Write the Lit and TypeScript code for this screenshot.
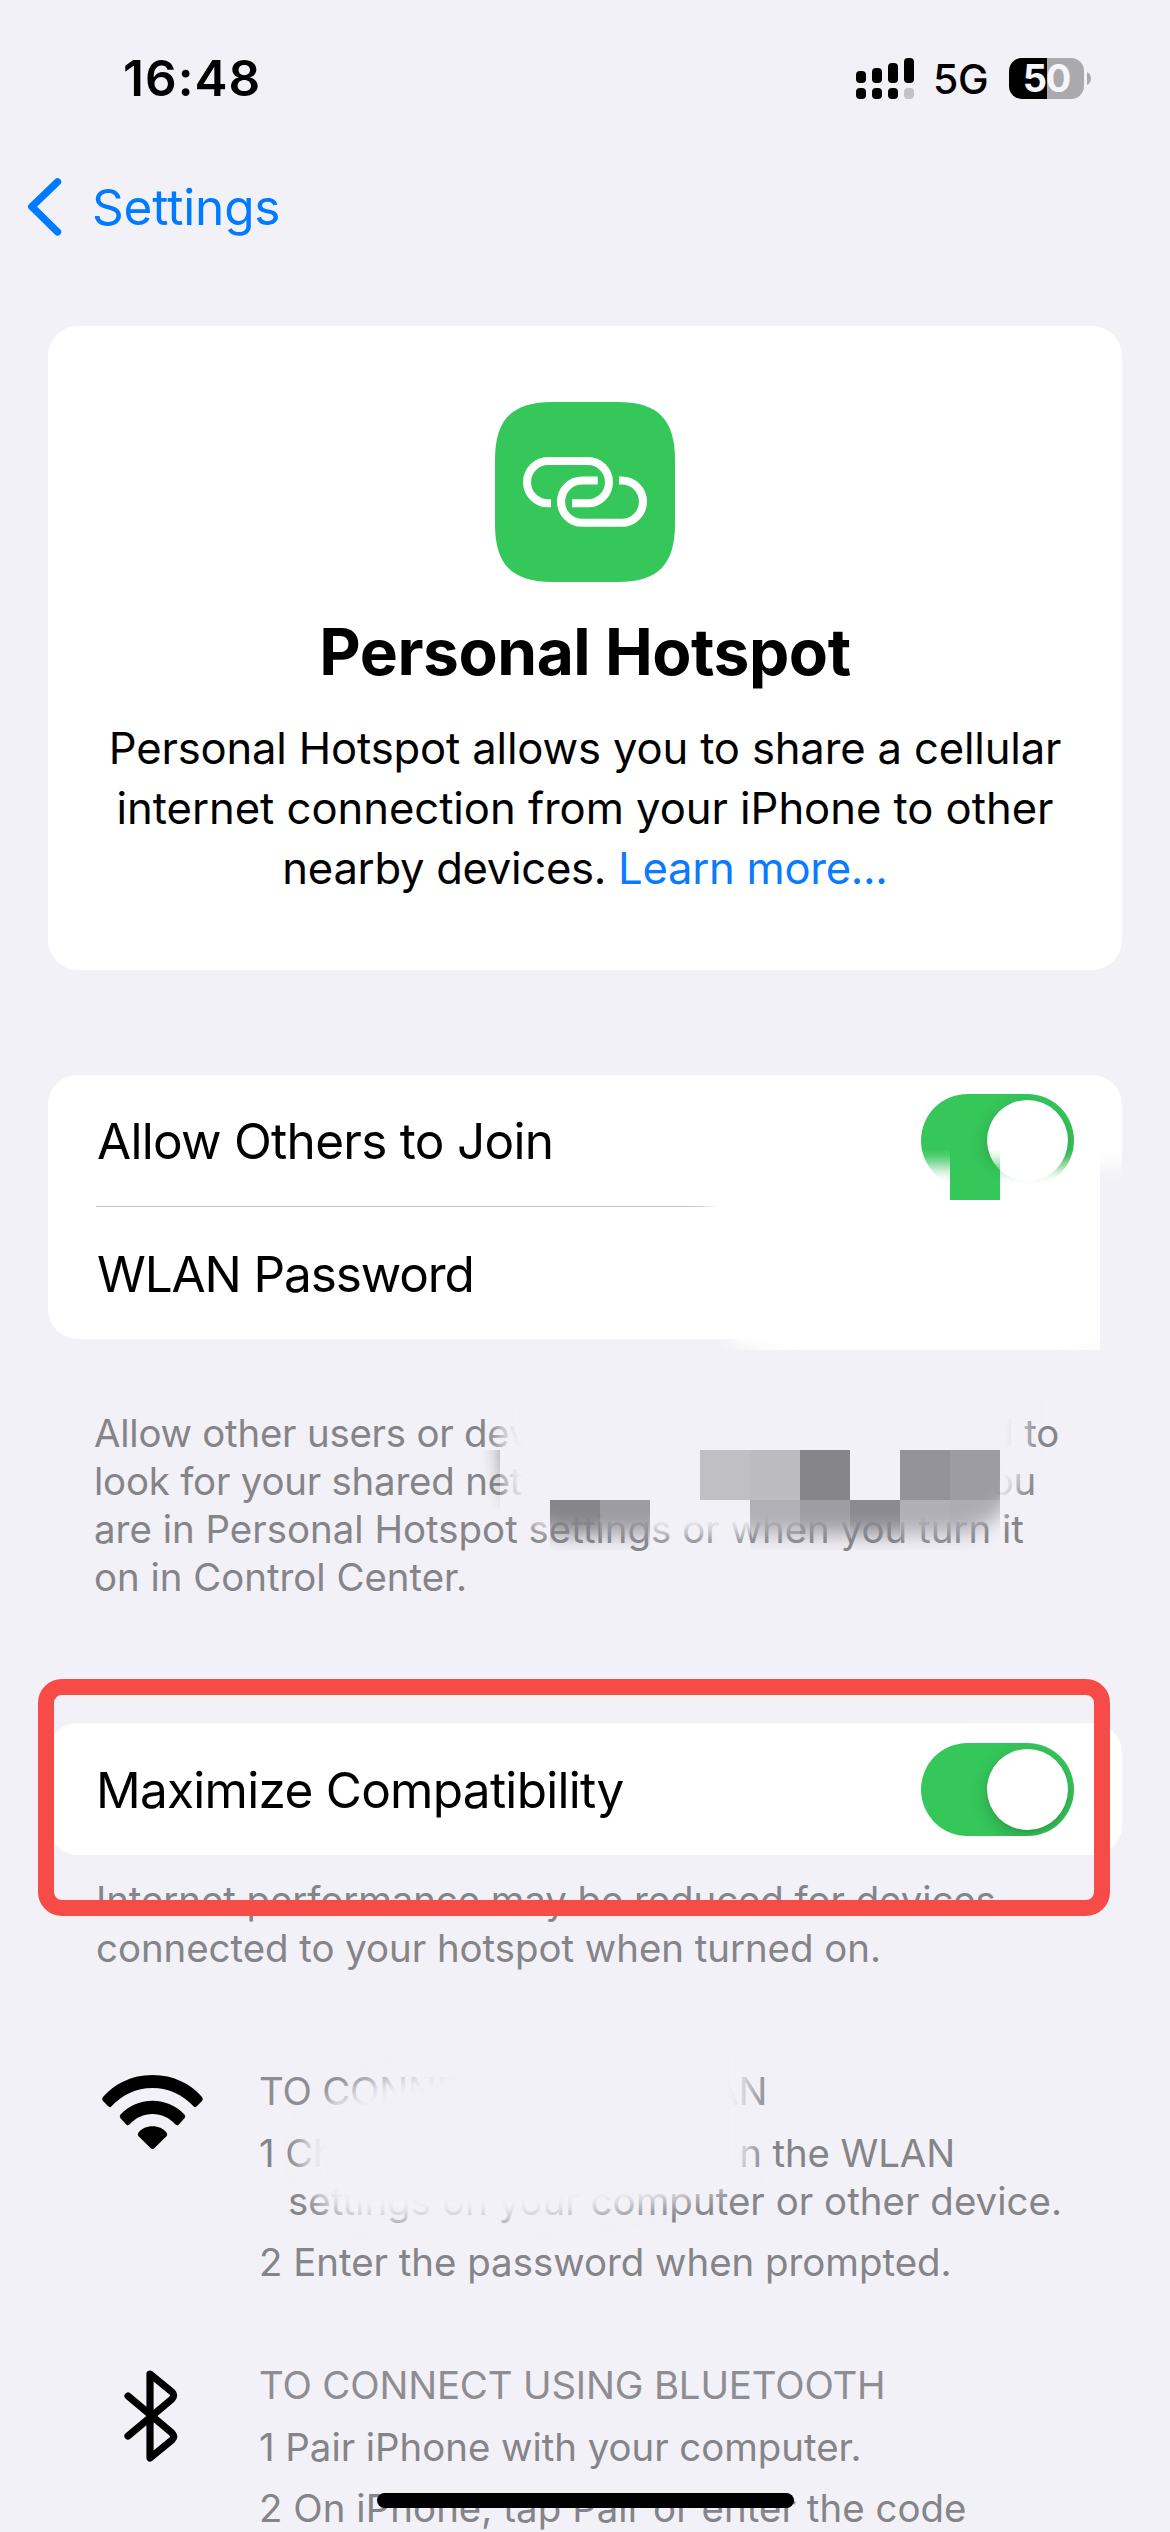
import { LitElement, html, svg, css, nothing } from "lit";
import { customElement, property } from "lit/decorators.js";

/** A line of copy and the tracking that it is set with. */
interface Line {
  text: string;
  tracking: number;
  tail?: string;
  width?: number;
  link?: string;
}

const INTRO: Line[] = [
  { text: "Personal Hotspot allows you to share a cellular", tracking: -0.165 },
  { text: "internet connection from your iPhone to other", tracking: -0.045 },
  { text: "nearby devices. ", link: "Learn more...", tracking: -0.281 },
];

const SHARING_NOTE: Line[] = [
  { text: "Allow other users or dev", tail: "d to", width: 965, tracking: -0.22 },
  { text: "look for your shared net", tail: "ou", width: 942, tracking: -0.2 },
  { text: "are in Personal Hotspot settings or when you turn it", tracking: 0.024 },
  { text: "on in Control Center.", tracking: -0.007 },
];

const COMPAT_NOTE: Line[] = [
  { text: "Internet performance may be reduced for devices", tracking: -0.063 },
  { text: "connected to your hotspot when turned on.", tracking: -0.02 },
];

const lineOf = (l: Line) => html`<div
  class="line"
  style="letter-spacing:${l.tracking}px;${l.width ? `width:${l.width}px` : ""}"
><span>${l.text}${l.link ? html`<a class="link">${l.link}</a>` : nothing}</span>${l.tail
    ? html`<span>${l.tail}</span>`
    : nothing}</div>`;

@customElement("toggle-switch")
export class ToggleSwitch extends LitElement {
  static styles = css`
    :host {
      display: block;
      flex: none;
    }
    .track {
      display: flex;
      justify-content: flex-end;
      align-items: center;
      box-sizing: border-box;
      width: 153px;
      height: 93px;
      padding-right: 6px;
      border-radius: 47px;
      background: #36c75b;
      overflow: hidden;
    }
    .knob {
      width: 81px;
      height: 81px;
      border-radius: 50%;
      background: #fff;
      box-shadow: 0 6px 18px rgba(0, 0, 0, 0.2), 0 2px 3px rgba(0, 0, 0, 0.06);
    }
  `;
  render() {
    return html`<div class="track"><div class="knob"></div></div>`;
  }
}

@customElement("status-bar")
export class StatusBar extends LitElement {
  static styles = css`
    :host {
      display: flex;
      align-items: center;
      justify-content: space-between;
      height: 60px;
      padding: 48px 79px 0 123px;
    }
    .time {
      font-weight: 600;
      font-size: 49.5px;
      line-height: 60px;
      letter-spacing: 1.06px;
    }
    .right {
      display: flex;
      align-items: center;
    }
    svg {
      display: block;
    }
    .net {
      margin: 2px 20px 0 19px;
      width: 56px;
      font-weight: 500;
      font-size: 41px;
      line-height: 50px;
      letter-spacing: -0.35px;
      white-space: nowrap;
    }
    .battery {
      display: flex;
      align-items: center;
      justify-content: center;
      width: 75px;
      height: 41px;
      border-radius: 13px;
      background: linear-gradient(90deg, #000 38px, #a9a9ae 38px);
      color: #f6f6fa;
      font-weight: 700;
      font-size: 38px;
      line-height: 42px;
      letter-spacing: -1.29px;
    }
    .cap {
      margin-left: 3px;
    }
  `;
  render() {
    return html`
      <div class="time">16:48</div>
      <div class="right">
        <svg width="58" height="41" viewBox="0 0 58 41">
          <rect x="0" y="13" width="10" height="12" rx="4" />
          <rect x="16" y="10" width="10" height="15" rx="4" />
          <rect x="32" y="5" width="10" height="20" rx="4" />
          <rect x="48" y="0" width="10" height="25" rx="4" />
          <rect x="0" y="30" width="10" height="11" rx="4" />
          <rect x="16" y="30" width="10" height="11" rx="4" />
          <rect x="32" y="30" width="10" height="11" rx="4" />
          <rect x="48" y="30" width="10" height="11" rx="4" fill="#c2c2c7" />
        </svg>
        <div class="net">5G</div>
        <div class="battery">50</div>
        <svg class="cap" width="4" height="13" viewBox="0 0 4 13">
          <path d="M0 0C5.3 2.5 5.3 10.5 0 13Z" fill="#a9a9ae" />
        </svg>
      </div>
    `;
  }
}

/** Square cells of one colour, laid over content and fading out at the edge. */
@customElement("mosaic-patch")
export class MosaicPatch extends LitElement {
  @property({ type: Number }) w = 0;
  @property({ type: Number }) h = 0;
  @property() shape = "";
  @property({ type: Number }) blur = 10;
  @property() base = "#f2f1f7";
  @property({ attribute: false }) cells: [number, number, number, number, string][] = [];

  static styles = css`
    :host {
      display: block;
      position: absolute;
      z-index: 1;
      pointer-events: none;
    }
    svg {
      display: block;
    }
  `;
  render() {
    return html`<svg width=${this.w} height=${this.h} viewBox="0 0 ${this.w} ${this.h}">
      <defs>
        <filter id="soft" filterUnits="userSpaceOnUse" x="-100" y="-100" width=${this.w + 200} height=${this.h + 200}>
          <feGaussianBlur stdDeviation=${this.blur} />
        </filter>
        <mask id="fade" maskUnits="userSpaceOnUse" x="0" y="0" width=${this.w} height=${this.h}>
          <path d=${this.shape} fill="#fff" filter="url(#soft)" />
        </mask>
      </defs>
      <g mask="url(#fade)" shape-rendering="crispEdges">
        <rect width=${this.w} height=${this.h} fill=${this.base} />
        ${this.cells.map(
          ([x, y, w, h, c]) => svg`<rect x=${x} y=${y} width=${w} height=${h} fill=${c} />`
        )}
      </g>
    </svg>`;
  }
}

@customElement("app-root")
export class AppRoot extends LitElement {
  static styles = css`
    :host {
      display: block;
      font-family: Inter, "Liberation Sans", sans-serif;
      color: #000;
    }
    .page {
      position: relative;
      width: 1170px;
      height: 2532px;
      overflow: hidden;
      background: #f2f1f7;
    }
    svg {
      display: block;
    }
    .nav {
      display: flex;
      align-items: center;
      gap: 27px;
      height: 60px;
      margin-top: 69px;
      padding-left: 25px;
      color: #007aff;
      font-size: 49.5px;
      line-height: 60px;
      letter-spacing: -0.15px;
    }
    .card {
      position: relative;
      margin: 0 48px;
      border-radius: 30px;
      background: #fff;
    }
    .hero {
      display: flex;
      flex-direction: column;
      align-items: center;
      box-sizing: border-box;
      height: 644px;
      margin-top: 89px;
      padding-top: 76px;
    }
    .title {
      margin: 30px 0 27px;
      font-weight: 700;
      font-size: 64px;
      line-height: 80px;
      letter-spacing: -0.46px;
    }
    .line {
      display: flex;
      justify-content: space-between;
      white-space: pre;
    }
    .intro {
      font-size: 43.6px;
      line-height: 60px;
    }
    .intro .line {
      justify-content: center;
    }
    .link {
      color: #0a7aff;
    }
    .group {
      margin-top: 105px;
    }
    .compat {
      margin-top: 122px;
    }
    .row {
      display: flex;
      align-items: center;
      justify-content: space-between;
      box-sizing: border-box;
      height: 132px;
      margin-left: 48px;
      padding-right: 48px;
      font-size: 49.5px;
      line-height: 62px;
    }
    .ruled {
      border-bottom: 1px solid #c2c2c5;
    }
    .label {
      padding: 1px 0 0 1px;
      letter-spacing: -0.725px;
      white-space: nowrap;
    }
    .tight {
      letter-spacing: -1.12px;
    }
    .flush {
      padding-left: 0;
    }
    .note {
      position: relative;
      padding-left: 94px;
      color: #858489;
      font-size: 38.4px;
      line-height: 48px;
    }
    .sharing {
      margin-top: 70px;
    }
    .after {
      margin-top: 21px;
      padding-left: 96px;
    }
    .guide {
      position: relative;
      display: grid;
      grid-template-columns: 157px auto;
      justify-content: start;
      padding-left: 102px;
      color: #858489;
      font-size: 38.4px;
      line-height: 48px;
    }
    .wlan {
      margin-top: 95px;
    }
    .bluetooth {
      margin-top: 74.6px;
    }
    .wifi-icon {
      margin-top: 8px;
    }
    .bt-icon {
      margin: 8px 0 0 21px;
    }
    .steps {
      display: flex;
      flex-direction: column;
      gap: 13.7px;
    }
    .heading {
      color: #8e8d93;
    }
    .hang {
      padding-left: 29px;
    }
    .patch-card {
      left: 602px;
      top: 75px;
    }
    .patch-note {
      left: 450px;
      top: -9px;
    }
    .patch-guide {
      left: 250px;
      top: -17px;
    }
    .callout {
      position: absolute;
      z-index: 2;
      left: -10px;
      top: -44px;
      box-sizing: border-box;
      width: 1072px;
      height: 237px;
      border: 16px solid #f74b47;
      border-radius: 24px;
    }
    .home {
      position: absolute;
      z-index: 3;
      left: 377px;
      top: 2493px;
      width: 417px;
      height: 15px;
      border-radius: 8px;
      background: #000;
    }
  `;

  render() {
    return html`
      <div class="page">
        <status-bar></status-bar>
        <div class="nav">
          <svg width="40" height="60" viewBox="0 0 40 60">
            <path d="M32.5 4.8L6.8 29.7L32.5 54.8" fill="none" stroke="#007aff" stroke-width="7.4" stroke-linecap="round" stroke-linejoin="round" />
          </svg>
          <span>Settings</span>
        </div>

        <div class="card hero">
          <svg width="180" height="180" viewBox="0 0 180 180">
            <path d="M0 58C0 17 17 0 58 0H122C163 0 180 17 180 58V122C180 163 163 180 122 180H58C17 180 0 163 0 122Z" fill="#36c75b" />
            <g fill="none" stroke="#fff" stroke-width="8">
              <path d="M56 101.3H53.2A21.15 21.15 0 0 1 53.2 59H92.8A21.15 21.15 0 0 1 92.8 101.3H77" />
              <path d="M102.7 78.5H87.2A21.15 21.15 0 0 0 87.2 120.8H126.8A21.15 21.15 0 0 0 126.8 78.5H124" />
            </g>
          </svg>
          <div class="title">Personal Hotspot</div>
          <div class="intro">${INTRO.map(lineOf)}</div>
        </div>

        <div class="card group">
          <div class="row ruled">
            <span class="label">Allow Others to Join</span>
            <toggle-switch></toggle-switch>
          </div>
          <div class="row"><span class="label tight">WLAN Password</span></div>
          <mosaic-patch
            class="patch-card"
            .w=${500}
            .h=${200}
            .blur=${9}
            .base=${"#ffffff"}
            .cells=${[
              [450, 0, 50, 200, "#f2f1f7"],
              [300, 0, 50, 50, "#36c75b"],
            ]}
            .shape=${"M56 60Q56 15 110 15H600V130Q540 195 380 215H180Q60 205 56 150Z"}
          ></mosaic-patch>
        </div>

        <div class="note sharing">
          ${SHARING_NOTE.map(lineOf)}
          <mosaic-patch
            class="patch-note"
            .w=${600}
            .h=${150}
            .blur=${10}
            .cells=${[
              [0, 50, 50, 60, "#868589"],
              [250, 50, 50, 50, "#bfbfc4"],
              [300, 50, 50, 50, "#bbbbc0"],
              [350, 50, 50, 50, "#868589"],
              [450, 50, 50, 50, "#939298"],
              [500, 50, 50, 50, "#9d9ca2"],
              [100, 100, 50, 50, "#868589"],
              [150, 100, 50, 50, "#9d9ca2"],
              [300, 100, 50, 50, "#b1b0b6"],
              [350, 100, 50, 50, "#9e9da3"],
              [400, 100, 50, 50, "#8b8a90"],
              [450, 100, 50, 50, "#b0afb5"],
              [500, 100, 50, 50, "#adacb3"],
            ]}
            .shape=${"M46 -60H575V60Q562 132 500 134H115Q56 128 52 60Z"}
          ></mosaic-patch>
        </div>

        <div class="card compat">
          <div class="row">
            <span class="label flush">Maximize Compatibility</span>
            <toggle-switch></toggle-switch>
          </div>
          <div class="callout"></div>
        </div>
        <div class="note after">${COMPAT_NOTE.map(lineOf)}</div>

        <div class="guide wlan">
          <svg class="wifi-icon" width="101" height="75" viewBox="0 0 101 75">
            <path d="M50.5 0C72 0 88.5 9 100 22Q101.5 24 100 26L94.5 31.5Q93 33 91.5 31.2C81 20 67 13 50.5 13S20 20 9.5 31.2Q8 33 6.5 31.5L1 26Q-.5 24 1 22C12.5 9 29 0 50.5 0Z" />
            <path d="M50.5 25.7C63.5 25.7 74.5 31 82.5 39.500Q84 41.5 82.5 43.3L76.5 49.8Q75 51 73.5 49.5C67 42.5 59.5 39 50.5 39S34 42.5 27.5 49.5Q26 51 24.5 49.8L18.5 43.3Q17 41.5 18.5 39.5C26.5 31 37.5 25.7 50.5 25.7Z" />
            <path d="M50.5 51.3C56.5 51.3 61 53.5 64.5 57.5Q66 59.5 64.5 61.2L52.5 73Q50.5 75 48.5 73L36.5 61.2Q35 59.5 36.5 57.5C40 53.5 44.5 51.3 50.5 51.3Z" />
          </svg>
          <div class="steps">
            <div class="heading">${lineOf({ text: "TO CONNECT USING WLAN", tracking: -0.207 })}</div>
            <div>
              ${lineOf({ text: "1 Ch", tail: "n the WLAN", width: 696, tracking: -0.105 })}
              <div class="hang">${lineOf({ text: "settings on your computer or other device.", tracking: 0.053 })}</div>
            </div>
            ${lineOf({ text: "2 Enter the password when prompted.", tracking: -0.002 })}
          </div>
          <mosaic-patch
            class="patch-guide"
            .w=${550}
            .h=${200}
            .blur=${11}
            .shape=${"M52 100C56 48 110 30 190 14C210 -20 240 -40 260 -40H500V120C490 144 380 160 290 172H110C70 166 50 130 52 100Z"}
          ></mosaic-patch>
        </div>

        <div class="guide bluetooth">
          <svg class="bt-icon" width="58" height="94" viewBox="0 0 58 94">
            <path d="M5 27L48.5 63.5Q52.500 67.5 49 71L27 89V5L49 23Q52.5 26.5 48.5 30.5L5 67" fill="none" stroke="#000" stroke-width="7.2" stroke-linecap="round" stroke-linejoin="round" />
          </svg>
          <div class="steps">
            <div class="heading">${lineOf({ text: "TO CONNECT USING BLUETOOTH", tracking: -0.159 })}</div>
            ${lineOf({ text: "1 Pair iPhone with your computer.", tracking: -0.028 })}
            ${lineOf({ text: "2 On iPhone, tap Pair or enter the code", tracking: 0.061 })}
          </div>
        </div>
        <div class="home"></div>
      </div>
    `;
  }
}
